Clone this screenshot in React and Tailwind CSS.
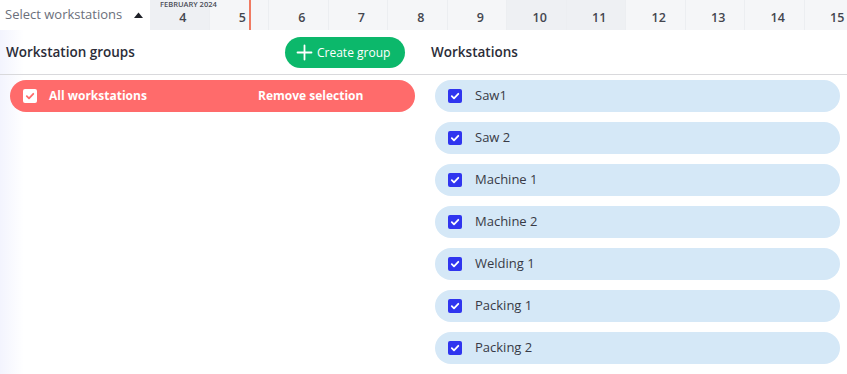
import React from 'react';

const days = [
  { n: 4, weekend: true },
  { n: 5 },
  { n: 6 },
  { n: 7 },
  { n: 8 },
  { n: 9 },
  { n: 10, weekend: true },
  { n: 11, weekend: true },
  { n: 12 },
  { n: 13 },
  { n: 14 },
  { n: 15 },
];

const workstations = ['Saw1', 'Saw 2', 'Machine 1', 'Machine 2', 'Welding 1', 'Packing 1', 'Packing 2'];

const Check = ({ color }) => (
  <svg width="10" height="10" viewBox="0 0 10 10" fill="none">
    <polyline points="1.8,5.2 4,7.3 8.3,2.8" stroke={color} strokeWidth="1.8" strokeLinecap="round" strokeLinejoin="round" />
  </svg>
);

const App = () => {
  return (
    <div className="w-[847px] h-[374px] overflow-hidden bg-white text-[#2d2f3a]" style={{ fontFamily: '"Open Sans", "Noto Sans", sans-serif' }}>
      {/* timeline header */}
      <div className="flex h-[30px] bg-[#f5f6f8]">
        <div className="w-[150px] shrink-0 bg-white flex items-center justify-between pl-[5px] pr-[7px]">
          <span className="text-[13px] text-[#6b6f7b] whitespace-nowrap">Select workstations</span>
          <svg width="9" height="6" viewBox="0 0 9 6">
            <polygon points="0,6 4.5,0.5 9,6" fill="#1f2128" />
          </svg>
        </div>
        <div className="relative flex overflow-hidden">
          <span className="absolute z-10 left-[10px] top-[-1px] text-[7.5px] font-semibold text-[#4a4d57] whitespace-nowrap">FEBRUARY 2024</span>
          <div className="absolute z-10 left-[99px] top-0 h-full w-[2px] bg-[#f07a62]" />
          {days.map((d) => (
            <div
              key={d.n}
              className={`w-[59.5px] shrink-0 h-full border-r border-[#eceef1] flex items-end justify-center pl-[7px] pb-[6px] ${d.weekend ? 'bg-[#eef0f3]' : 'bg-[#f5f6f8]'}`}
            >
              <span className="text-[12.5px] font-semibold text-[#44464f] leading-none">{d.n}</span>
            </div>
          ))}
        </div>
      </div>

      {/* body */}
      <div className="flex h-[344px] bg-[linear-gradient(to_right,#f3f4fe,#ffffff_24px)]">
        <div className="w-[423px] shrink-0">
          <div className="h-[45px] flex items-center justify-between pl-[6px] pr-[18px] pt-[1px] border-b border-[#d9d9dc]">
            <span className="text-[13.5px] font-semibold text-[#2b2d38]">Workstation groups</span>
            <button className="h-[31px] w-[120px] rounded-full bg-[#0cb86b] text-white flex items-center pl-[11px] gap-[4px] text-[12px]">
              <svg width="17" height="17" viewBox="0 0 17 17">
                <path d="M8.5 1.5v14M1.5 8.5h14" stroke="white" strokeWidth="1.8" strokeLinecap="round" />
              </svg>
              Create group
            </button>
          </div>
          <div className="pl-[10px] pr-[8px] pt-[5px]">
            <div className="h-[32px] rounded-full bg-[#ff6b6b] flex items-center pl-[13px] text-white font-bold text-[12px]">
              <div className="w-[14px] h-[14px] rounded-[2px] bg-white flex items-center justify-center">
                <Check color="#ff6b6b" />
              </div>
              <span className="ml-[12px] w-[209px]">All workstations</span>
              <span>Remove selection</span>
            </div>
          </div>
        </div>
        <div className="flex-1">
          <div className="h-[45px] flex items-center pl-[8px] pt-[1px] border-b border-[#d9d9dc]">
            <span className="text-[13.5px] font-semibold text-[#2b2d38]">Workstations</span>
          </div>
          <div className="pl-[12px] pr-[7px] pt-[5px] flex flex-col gap-[10px]">
            {workstations.map((w) => (
              <div key={w} className="h-[32px] rounded-full bg-[#d5e8f7] flex items-center pl-[13px]">
                <div className="w-[14px] h-[14px] rounded-[2px] bg-[#3035ef] flex items-center justify-center">
                  <Check color="white" />
                </div>
                <span className="ml-[13px] text-[13px] text-[#383a46]">{w}</span>
              </div>
            ))}
          </div>
        </div>
      </div>
    </div>
  );
};

export default App;
